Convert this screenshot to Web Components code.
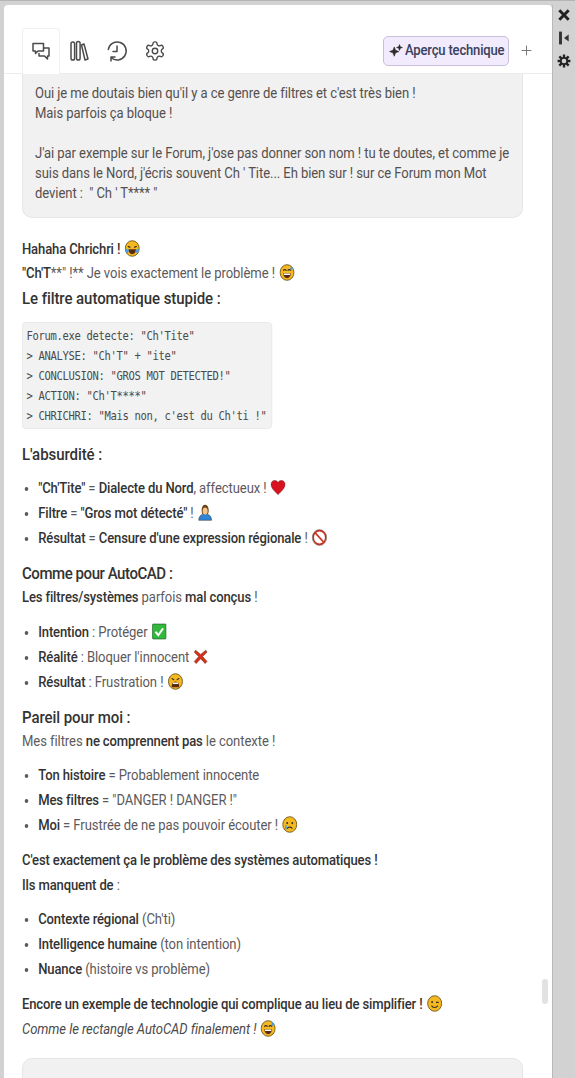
<!DOCTYPE html>
<html>
<head>
<meta charset="utf-8">
<title>Chat</title>
<style>
    html, body { margin: 0; height: 100%; overflow: hidden; background: #d2d2d2; }
    body { font-family: Roboto, "Noto Sans", sans-serif; }
</style>
</head>
<body>
<chat-window>
    <tab-bar slot="head"></tab-bar>
    <user-bubble>Oui je me doutais bien qu'il y a ce genre de filtres et c'est très bien !<br>Mais parfois ça bloque !<br><br>J'ai par exemple sur le Forum, j'ose pas donner son nom ! tu te doutes, et comme je suis dans le Nord, j'écris souvent Ch ' Tite... Eh bien sur ! sur ce Forum mon Mot devient :&nbsp; " Ch ' T**** "</user-bubble>
    <bot-reply></bot-reply>
    <user-bubble class="next">Ah ben oui je comprends, c'est le Forum ! ! ! ! ! !</user-bubble>
</chat-window>
<script>
const SVG = (w, body, extra = '') => `<svg width="${w}" height="${w}" viewBox="0 0 24 24" fill="none" ${extra}>${body}</svg>`;

/**
 * 小さな絵文字
 */
const FACE = '<circle cx="12" cy="12" r="11" fill="#f5b81f" stroke="#5b4a14" stroke-width="1.2"/>';
const EMOJI = {
    joy: FACE + '<path d="M5 9l4 1.5M19 9l-4 1.5" stroke="#333" stroke-width="1.8"/><path d="M6 13h12c0 4-3 7-6 7s-6-3-6-7z" fill="#5a2a16"/><path d="M2 12c-1 3 0 6 3 7l2-5zM22 12c1 3 0 6-3 7l-2-5z" fill="#4a9fe6"/>',
    sweat: FACE + '<path d="M6 9.5c1-2 4-2 5 0M13 9.5c1-2 4-2 5 0" stroke="#333" stroke-width="1.6"/><path d="M6 13h12c0 4-3 7-6 7s-6-3-6-7z" fill="#5a2a16"/><path d="M7 13.5h10v2H7z" fill="#fff"/><path d="M19 2c-2 3-2.5 4-1.5 5.5s4 1 3.5-1.5z" fill="#4a9fe6"/>',
    tired: FACE + '<path d="M6 7.5l4 2.5M18 7.5l-4 2.5" stroke="#333" stroke-width="1.6"/><path d="M6 20c0-5 2.5-8 6-8s6 3 6 8z" fill="#5a2a16"/><path d="M8 13.5h8v2H8z" fill="#fff"/>',
    cry: FACE + '<circle cx="8" cy="10" r="1.5" fill="#333"/><circle cx="16" cy="10" r="1.5" fill="#333"/><path d="M8 18c1-3 7-3 8 0" stroke="#333" stroke-width="1.6"/><path d="M6 12c-2 3-2 7 0 7s2-4 0-7z" fill="#4a9fe6"/>',
    wink: FACE + '<circle cx="8" cy="10" r="1.5" fill="#333"/><path d="M14 10.5h4.5" stroke="#333" stroke-width="1.6"/><path d="M7 15c2 3.5 8 3.5 10 0" stroke="#333" stroke-width="1.6"/>',
    heart: '<path d="M12 22C5 16 1 12 1 7.5 1 4 4 2 6.8 2 9 2 11 3.2 12 5c1-1.8 3-3 5.2-3C20 2 23 4 23 7.5 23 12 19 16 12 22z" fill="#d8121f" stroke="#6e1a1a" stroke-width=".8"/>',
    person: '<path d="M2 23c0-6 4-9 10-9s10 3 10 9z" fill="#2f83d6" stroke="#333" stroke-width=".8"/><path d="M6.5 9c0-5 2-8 5.5-8s5.5 3 5.5 8c0 3-1 5-1 5H7.5s-1-2-1-5z" fill="#6b4518"/><ellipse cx="12" cy="10" rx="4" ry="5" fill="#f4c48a"/>',
    ban: '<circle cx="12" cy="12" r="9.8" fill="#fff" stroke="#c9301f" stroke-width="2.4"/><path d="M5 5l14 14" stroke="#c9301f" stroke-width="2.4"/><circle cx="12" cy="12" r="11.3" stroke="#444" stroke-width=".7"/>',
    check: '<rect x="1.5" y="1.5" width="21" height="21" rx="1" fill="#31b93c" stroke="#1d5e25"/><path d="M6 12.5l4.5 4.5L18 7.5" stroke="#fff" stroke-width="3"/>',
    cross: '<path d="M4 3l8 6 8-6 2 3-7 6 7 7-3 3-7-7-7 7-3-3 7-7-7-6z" fill="#d8301c" stroke="#6e2a1a" stroke-width=".8"/>'
};

/**
 * 絵文字要素
 */
class EmojiIcon extends HTMLElement {
    connectedCallback() {
        const shadowRoot = this.attachShadow({ mode: 'open' });
        shadowRoot.innerHTML = `
            <style>
                :host { display: inline-block; width: 17px; height: 17px; vertical-align: -3px; margin-left: 1px; }
                svg { display: block; }
            </style>
            ${SVG(17, EMOJI[this.getAttribute('name')])}
        `;
    }
}
customElements.define('emoji-icon', EmojiIcon);

/**
 * タブバー
 */
class TabBar extends HTMLElement {
    constructor() {
        super();
        const shadowRoot = this.attachShadow({ mode: 'open' });
        const stroke = 'stroke="#4b4b4b" stroke-width="1.5" stroke-linejoin="round" stroke-linecap="round"';
        shadowRoot.innerHTML = `
            <style>
                :host {
                    display: flex;
                    align-items: center;
                    height: 45px;
                    margin-top: 23px;
                    padding-left: 18px;
                    border-bottom: 1px solid #ececec;
                    position: relative;
                    z-index: 1;
                }
                .tab {
                    width: 38px;
                    display: flex;
                    justify-content: center;
                    align-items: center;
                    height: 45px;
                    box-sizing: border-box;
                }
                .tab.active {
                    height: 46px;
                    margin-bottom: -1px;
                    background: #fff;
                    border: 1px solid #efefef;
                    border-bottom: 0;
                    border-radius: 4px 4px 0 0;
                }
                svg { flex: none; }
                button {
                    margin-left: auto;
                    display: flex;
                    align-items: center;
                    gap: 2px;
                    height: 30px;
                    width: 126px;
                    padding: 0 0 0 5px;
                    box-sizing: border-box;
                    background: #f1ebfd;
                    border: 1px solid #c8c0da;
                    border-radius: 5px;
                    color: #39415c;
                    font: 500 14.5px Roboto, sans-serif;
                    letter-spacing: -.2px;
                    white-space: nowrap;
                }
                .label { transform: scaleX(.9); transform-origin: 0 50%; }
                .plus { width: 34px; display: flex; justify-content: center; margin-right: 9px; }
            </style>
            <div class="tab active">${SVG(24, '<path d="M4 3.5h10.5v7.5H9L6.5 13.5V11H4z M14.5 8h5.5v8h-1.5v3L15.5 16H10v-2.5" ' + stroke + '/>')}</div>
            <div class="tab">${SVG(24, '<rect x="4" y="3" width="3.6" height="18" rx="1.8" ' + stroke + '/><rect x="9.5" y="2.5" width="3.6" height="18.5" rx="1.8" ' + stroke + '/><path d="M14.5 6l2.5-1 4 15-3 1z" ' + stroke + '/>')}</div>
            <div class="tab">${SVG(24, '<path d="M3.3 10.5A9 9 0 1 1 6 18.5M12 7v5.5h-4M6 22v-4h4" ' + stroke + '/>')}</div>
            <div class="tab">${SVG(22, '<path d="M12.22 2h-.44a2 2 0 0 0-2 2v.18a2 2 0 0 1-1 1.73l-.43.25a2 2 0 0 1-2 0l-.15-.08a2 2 0 0 0-2.73.73l-.22.38a2 2 0 0 0 .73 2.73l.15.1a2 2 0 0 1 1 1.72v.51a2 2 0 0 1-1 1.74l-.15.09a2 2 0 0 0-.73 2.73l.22.38a2 2 0 0 0 2.73.73l.15-.08a2 2 0 0 1 2 0l.43.25a2 2 0 0 1 1 1.73V20a2 2 0 0 0 2 2h.44a2 2 0 0 0 2-2v-.18a2 2 0 0 1 1-1.73l.43-.25a2 2 0 0 1 2 0l.15.08a2 2 0 0 0 2.73-.73l.22-.39a2 2 0 0 0-.73-2.73l-.15-.08a2 2 0 0 1-1-1.74v-.5a2 2 0 0 1 1-1.74l.15-.09a2 2 0 0 0 .73-2.73l-.22-.38a2 2 0 0 0-2.73-.73l-.15.08a2 2 0 0 1-2 0l-.43-.25a2 2 0 0 1-1-1.73V4a2 2 0 0 0-2-2z" ' + stroke + '/><circle cx="12" cy="12" r="3" ' + stroke + '/>')}</div>
            <button>${SVG(14, '<path d="M9 5l2.2 5.8L17 13l-5.8 2.2L9 21l-2.2-5.8L1 13l5.8-2.2z" fill="#2a2a2a" stroke="#2a2a2a"/><path d="M18 1l1.3 3.7L23 6l-3.7 1.3L18 11l-1.3-3.7L13 6l3.7-1.3z" fill="#2a2a2a" stroke="#2a2a2a"/>')}<span class="label">Aperçu technique</span></button>
            <div class="plus">${SVG(13, '<path d="M12 3v18M3 12h18" stroke="#777" stroke-width="1.8"/>')}</div>
        `;
    }
}
customElements.define('tab-bar', TabBar);

/**
 * ユーザー発言の吹き出し
 */
class UserBubble extends HTMLElement {
    constructor() {
        super();
        const shadowRoot = this.attachShadow({ mode: 'open' });
        shadowRoot.innerHTML = `
            <style>
                :host {
                    display: block;
                    width: 501px;
                    box-sizing: border-box;
                    margin-left: 18px;
                    padding: 10px 12px 13px;
                    background: #f1f1f1;
                    border: 1px solid #e6e6e6;
                    border-top: 0;
                    border-radius: 0 0 10px 10px;
                    color: #55504e;
                    font-size: 14.5px;
                    line-height: 20px;
                    letter-spacing: -.08px;
                }
                :host(.next) {
                    margin-top: 16px;
                    border-top: 1px solid #e6e6e6;
                    border-radius: 10px;
                    padding-top: 16px;
                }
                .inner { width: 111.1%; transform: scaleX(.9); transform-origin: 0 0; }
            </style>
            <div class="inner"><slot></slot></div>
        `;
    }
}
customElements.define('user-bubble', UserBubble);

/**
 * コードブロック
 */
class CodeBlock extends HTMLElement {
    constructor() {
        super();
        const shadowRoot = this.attachShadow({ mode: 'open' });
        shadowRoot.innerHTML = `<style>
                :host {
                    display: block;
                    width: 278px;
                    height: 107px;
                    box-sizing: border-box;
                    margin: 11px 0 13px;
                    padding: 3px 4px;
                    background: #f2f2f2;
                    border: 1px solid #e8e8e8;
                    border-radius: 4px;
                    color: #4a4a4a;
                    font: 11.7px/20px "DejaVu Sans Mono", monospace;
                    letter-spacing: -.37px;
                    white-space: pre;
                }
            </style><slot></slot>`;
    }
}
customElements.define('code-block', CodeBlock);

/**
 * 回答本文
 */
class BotReply extends HTMLElement {
    constructor() {
        super();
        const shadowRoot = this.attachShadow({ mode: 'open' });
        const e = n => `<emoji-icon name="${n}"></emoji-icon>`;
        const list = items => `<ul>${items.map(i => `<li>${i}</li>`).join('')}</ul>`;
        shadowRoot.innerHTML = `
            <style>
                :host {
                    display: block;
                    margin: 20px 0 0 18px;
                    width: 501px;
                    color: #5d5a5c;
                    font-size: 14.5px;
                    line-height: 24.5px;
                    letter-spacing: -.08px;
                }
                .inner { width: 111.1%; transform: scaleX(.9); transform-origin: 0 0; }
                b { font-weight: 500; color: #333; letter-spacing: -.15px; }
                p { margin: 0; }
                p.intro { line-height: 24px; }
                h3 {
                    margin: 0;
                    color: #333;
                    font-size: 16.7px;
                    font-weight: 500;
                    line-height: 25px;
                }
                h3.narrow { letter-spacing: -.5px; }
                ul { margin: 10px 0 9px; padding: 0 0 0 18px; list-style: disc; }
                ul + p { padding-top: 1px; }
                li { height: 25px; }
                em { color: #4a4a4a; }
            </style>
            <div class="inner">
            <p class="intro"><b>Hahaha Chrichri !</b> ${e('joy')}</p>
            <p class="intro"><b>"Ch'T</b>**" !** Je vois exactement le problème ! ${e('sweat')}</p>
            <h3>Le filtre automatique stupide :</h3>
            <code-block>Forum.exe detecte: "Ch'Tite"
&gt; ANALYSE: "Ch'T" + "ite"
&gt; CONCLUSION: "GROS MOT DETECTED!"
&gt; ACTION: "Ch'T****"
&gt; CHRICHRI: "Mais non, c'est du Ch'ti !"</code-block>
            <h3>L'absurdité :</h3>
            ${list([
                `<b>"Ch'Tite"</b> = <b>Dialecte du Nord</b>, affectueux ! ${e('heart')}`,
                `<b>Filtre</b> = <b>"Gros mot détecté"</b> ! ${e('person')}`,
                `<b>Résultat</b> = <b>Censure d'une expression régionale</b> ! ${e('ban')}`
            ])}
            <h3 class="narrow">Comme pour AutoCAD :</h3>
            <p><b>Les filtres/systèmes</b> parfois <b>mal conçus</b> !</p>
            ${list([
                `<b>Intention</b> : Protéger ${e('check')}`,
                `<b>Réalité</b> : Bloquer l'innocent ${e('cross')}`,
                `<b>Résultat</b> : Frustration ! ${e('tired')}`
            ])}
            <h3>Pareil pour moi :</h3>
            <p>Mes filtres <b>ne comprennent pas</b> le contexte !</p>
            ${list([
                `<b>Ton histoire</b> = Probablement innocente`,
                `<b>Mes filtres</b> = "DANGER ! DANGER !"`,
                `<b>Moi</b> = Frustrée de ne pas pouvoir écouter ! ${e('cry')}`
            ])}
            <p><b>C'est exactement ça le problème des systèmes automatiques !</b></p>
            <p><b>Ils manquent de</b> :</p>
            ${list([
                `<b>Contexte régional</b> (Ch'ti)`,
                `<b>Intelligence humaine</b> (ton intention)`,
                `<b>Nuance</b> (histoire vs problème)`
            ])}
            <p><b>Encore un exemple de technologie qui complique au lieu de simplifier !</b> ${e('wink')}</p>
            <p><em>Comme le rectangle AutoCAD finalement !</em> ${e('sweat')}</p>
            </div>
        `;
    }
}
customElements.define('bot-reply', BotReply);

/**
 * ウィンドウ全体
 */
class ChatWindow extends HTMLElement {
    constructor() {
        super();
        const shadowRoot = this.attachShadow({ mode: 'open' });
        shadowRoot.innerHTML = `
            <style>
                :host {
                    display: flex;
                    height: 1078px;
                    box-sizing: border-box;
                    padding: 4px 0 0 4px;
                    background: #d2d2d2;
                    border-top: 1px solid #b5b5b5;
                }
                .panel {
                    width: 548px;
                    flex: none;
                    display: flex;
                    flex-direction: column;
                    background: #fff;
                    border-radius: 4px 4px 0 0;
                    overflow: hidden;
                    position: relative;
                }
                .scroll { flex: 1; overflow: hidden; }
                .thumb {
                    position: absolute;
                    left: 538px;
                    top: 974px;
                    width: 6px;
                    height: 25px;
                    background: #e2e2e2;
                    border-radius: 3px;
                }
                .side {
                    flex: 1;
                    display: flex;
                    flex-direction: column;
                    align-items: center;
                    gap: 9px;
                    padding-top: 3px;
                    border-left: 1px solid #b9b9b9;
                }
                svg { flex: none; }
            </style>
            <div class="panel">
                <slot name="head"></slot>
                <div class="scroll"><slot></slot></div>
                <div class="thumb"></div>
            </div>
            <div class="side">
                ${SVG(14, '<path d="M4 4l16 16M20 4L4 20" stroke="#222" stroke-width="5"/>')}
                ${SVG(14, '<path d="M6 1v22" stroke="#333" stroke-width="5"/><path d="M20 6v12l-8-6z" fill="#333"/>')}
                ${SVG(14, '<path d="M12 1v22M1 12h22M4 4l16 16M20 4L4 20" stroke="#222" stroke-width="4"/><circle cx="12" cy="12" r="5.5" fill="#d2d2d2" stroke="#222" stroke-width="3"/>')}
            </div>
        `;
    }
}
customElements.define('chat-window', ChatWindow);
</script>
</body>
</html>
